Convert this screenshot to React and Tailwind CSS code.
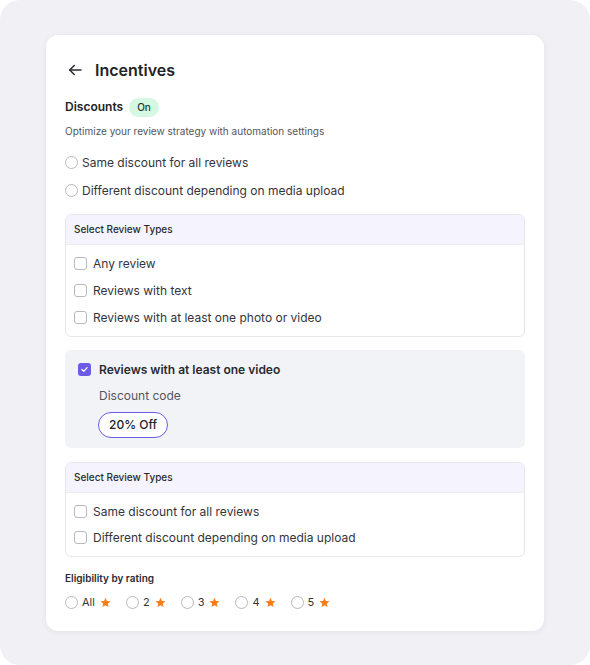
import React from "react";

const Radio = () => (
  <span className="inline-block w-[13px] h-[13px] rounded-full border border-[#b8b8be] bg-white shrink-0" />
);

const Box = () => (
  <span className="inline-block w-[13px] h-[13px] rounded-[3px] border border-[#b8b8be] bg-white shrink-0" />
);

const Star = () => (
  <svg width="11" height="11" viewBox="0 0 24 24" className="shrink-0">
    <path
      d="M12 1.8l3.1 7.1 7.6.6-5.8 5 1.8 7.5L12 18l-6.7 4 1.8-7.5-5.8-5 7.6-.6z"
      fill="#f97c16"
    />
  </svg>
);

const ReviewTypes = ({ items, gap = "gap-[10px]" }) => (
  <div className="border border-[#e6e6ec] rounded-[6px] overflow-hidden">
    {/* Header strip */}
    <div className="bg-[#f5f4fe] h-[30px] flex items-center px-[8px] border-b border-[#ececf2]">
      <span className="text-[10px] font-medium text-[#2a2a30]">Select Review Types</span>
    </div>
    <div className={"flex flex-col py-[10px] px-[8px] " + gap}>
      {items.map((t) => (
        <div key={t} className="flex items-center gap-[6px] h-[17px]">
          <Box />
          <span className="text-[12px] text-[#34343a]">{t}</span>
        </div>
      ))}
    </div>
  </div>
);

export default function App() {
  return (
    <div className="bg-white w-[590px] h-[665px]" style={{ fontFamily: "Inter, 'Liberation Sans', sans-serif" }}>
      <div className="w-full h-full rounded-[20px] bg-[#f1f1f5] pt-[35px] pl-[46px]">
        <div className="w-[498px] h-[596px] bg-white rounded-[12px] shadow-[0_1px_6px_rgba(20,20,40,0.07)] px-[19px] pt-[24px]">
          {/* Title */}
          <div className="flex items-center gap-[11px] h-[22px]">
            <svg width="18" height="18" viewBox="0 0 24 24" fill="none" stroke="#2a2a30" strokeWidth="2" strokeLinecap="round" strokeLinejoin="round" className="ml-[1px]">
              <path d="M20 12H5" />
              <path d="M11 6l-6 6 6 6" />
            </svg>
            <h1 className="text-[16px] font-semibold text-[#222226]">Incentives</h1>
          </div>

          {/* Discounts */}
          <div className="flex items-center gap-[6px] mt-[16px] h-[20px]">
            <span className="text-[12px] font-semibold text-[#222226]">Discounts</span>
            <span className="bg-[#d5f8e2] text-[#1c3b2a] text-[10px] font-medium rounded-full px-[8px] h-[19px] flex items-center">On</span>
          </div>
          <p className="text-[10px] text-[#55555c] mt-[7px]">Optimize your review strategy with automation settings</p>

          <div className="flex flex-col gap-[11px] mt-[15px]">
            <div className="flex items-center gap-[4px] h-[17px]">
              <Radio />
              <span className="text-[12px] text-[#34343a]">Same discount for all reviews</span>
            </div>
            <div className="flex items-center gap-[4px] h-[17px]">
              <Radio />
              <span className="text-[12px] text-[#34343a]">Different discount depending on media upload</span>
            </div>
          </div>

          <div className="mt-[15px]">
            <ReviewTypes items={["Any review", "Reviews with text", "Reviews with at least one photo or video"]} />
          </div>

          {/* Selected option */}
          <div className="mt-[13px] bg-[#f2f3f7] rounded-[6px] px-[13px] pt-[11px] pb-[10px]">
            <div className="flex items-center gap-[8px] h-[17px]">
              <span className="w-[13px] h-[13px] rounded-[3px] bg-[#6b5be6] flex items-center justify-center">
                <svg width="9" height="9" viewBox="0 0 24 24" fill="none" stroke="white" strokeWidth="3.5" strokeLinecap="round" strokeLinejoin="round">
                  <path d="M5 12l5 5 9-10" />
                </svg>
              </span>
              <span className="text-[12px] font-semibold text-[#2a2a30]">Reviews with at least one video</span>
            </div>
            <div className="text-[12px] text-[#55555c] ml-[21px] mt-[9px] leading-[17px]">Discount code</div>
            <div className="ml-[20px] mt-[8px] inline-flex items-center h-[26px] px-[10px] rounded-full border border-[#6b5be6] bg-white text-[12px] font-medium text-[#222226]">
              20% Off
            </div>
          </div>

          <div className="mt-[14px]">
            <ReviewTypes gap="gap-[9px]" items={["Same discount for all reviews", "Different discount depending on media upload"]} />
          </div>

          {/* Eligibility */}
          <div className="text-[10px] font-semibold text-[#2a2a30] mt-[14px]">Eligibility by rating</div>
          <div className="flex items-center gap-[15px] mt-[8px] h-[16px]">
            {["All", "2", "3", "4", "5"].map((r) => (
              <div key={r} className="flex items-center">
                <Radio />
                <span className="text-[11px] text-[#34343a] ml-[4px]">{r}</span>
                <span className="ml-[5px]"><Star /></span>
              </div>
            ))}
          </div>
        </div>
      </div>
    </div>
  );
}
